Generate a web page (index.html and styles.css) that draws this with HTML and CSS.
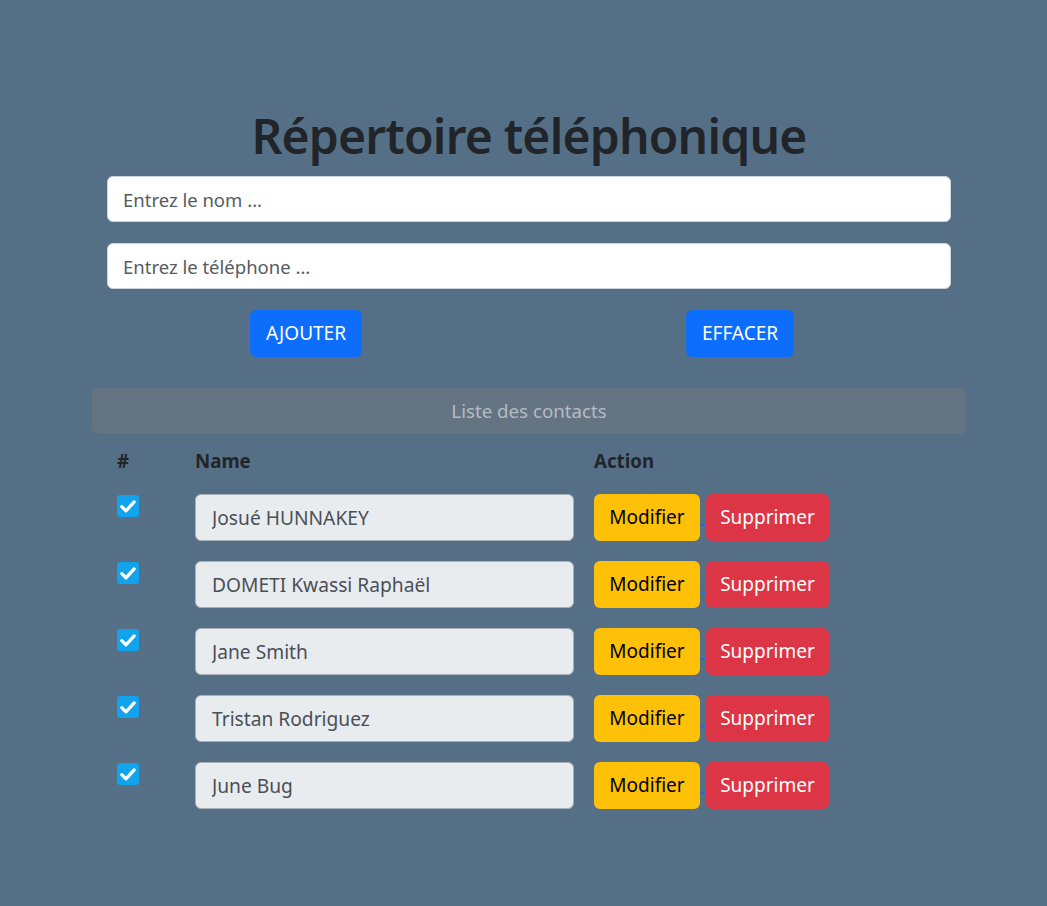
FILE: index.html
```html
<!DOCTYPE html>
<html lang="fr">
<head>
<meta charset="utf-8">
<title>Répertoire téléphonique</title>
<link rel="stylesheet" href="styles.css">
</head>
<body>
<div class="app">
  <h1 class="title">Répertoire téléphonique</h1>
  <form class="form">
    <input class="field" type="text" placeholder="Entrez le nom ...">
    <input class="field" type="text" placeholder="Entrez le téléphone ...">
    <div class="actions">
      <div class="col col-left"><button type="button" class="btn btn-primary">AJOUTER</button></div>
      <div class="col"><button type="button" class="btn btn-primary">EFFACER</button></div>
    </div>
  </form>
  <div class="list-header">Liste des contacts</div>
  <div class="table">
    <div class="row head">
      <div class="c1">#</div>
      <div class="c2">Name</div>
      <div class="c3">Action</div>
    </div>
    <div class="row">
      <div class="c1"><span class="check"><svg viewBox="0 0 16 16"><path d="M3.5 8.5l3 3 6-6.5" /></svg></span></div>
      <div class="c2"><input class="name" type="text" value="Josué HUNNAKEY" readonly></div>
      <div class="c3"><button class="btn btn-warning">Modifier</button><a class="sep" href="#">&nbsp;</a><button class="btn btn-danger">Supprimer</button></div>
    </div>
    <div class="row">
      <div class="c1"><span class="check"><svg viewBox="0 0 16 16"><path d="M3.5 8.5l3 3 6-6.5" /></svg></span></div>
      <div class="c2"><input class="name" type="text" value="DOMETI Kwassi Raphaël" readonly></div>
      <div class="c3"><button class="btn btn-warning">Modifier</button><a class="sep" href="#">&nbsp;</a><button class="btn btn-danger">Supprimer</button></div>
    </div>
    <div class="row">
      <div class="c1"><span class="check"><svg viewBox="0 0 16 16"><path d="M3.5 8.5l3 3 6-6.5" /></svg></span></div>
      <div class="c2"><input class="name" type="text" value="Jane Smith" readonly></div>
      <div class="c3"><button class="btn btn-warning">Modifier</button><a class="sep" href="#">&nbsp;</a><button class="btn btn-danger">Supprimer</button></div>
    </div>
    <div class="row">
      <div class="c1"><span class="check"><svg viewBox="0 0 16 16"><path d="M3.5 8.5l3 3 6-6.5" /></svg></span></div>
      <div class="c2"><input class="name" type="text" value="Tristan Rodriguez" readonly></div>
      <div class="c3"><button class="btn btn-warning">Modifier</button><a class="sep" href="#">&nbsp;</a><button class="btn btn-danger">Supprimer</button></div>
    </div>
    <div class="row">
      <div class="c1"><span class="check"><svg viewBox="0 0 16 16"><path d="M3.5 8.5l3 3 6-6.5" /></svg></span></div>
      <div class="c2"><input class="name" type="text" value="June Bug" readonly></div>
      <div class="c3"><button class="btn btn-warning">Modifier</button><a class="sep" href="#">&nbsp;</a><button class="btn btn-danger">Supprimer</button></div>
    </div>
  </div>
</div>
</body>
</html>
```
FILE: styles.css
```css
* { box-sizing: border-box; }
html, body { height: 100%; }
body {
  margin: 0;
  background: #557086;
  font-family: "Noto Sans", "Open Sans", sans-serif;
  color: #212529;
  font-size: 19px;
}
.app {
  width: 874px;
  margin-left: 92px;
  padding-top: 106px;
}
.title {
  margin: 0 0 10px;
  text-align: center;
  font-size: 48px;
  font-weight: 600;
  letter-spacing: -0.8px;
  line-height: 60px;
  color: #212529;
}
.form {
  padding: 0 15px;
}
.field {
  display: block;
  width: 100%;
  height: 46px;
  margin: 0 0 21px;
  padding: 0 15px;
  border: 1px solid #ced4da;
  border-radius: 6px;
  background: #fff;
  font-family: inherit;
  font-size: 18.5px;
  color: #495057;
}
.field::placeholder { color: #555b61; }
.actions {
  display: grid;
  grid-template-columns: 1fr 1fr;
  margin-bottom: 31px;
}
.col {
  display: flex;
  justify-content: center;
}
.col-left { padding-right: 24px; }
.btn {
  height: 47px;
  padding: 0 16px;
  border: 0;
  border-radius: 6px;
  font-family: inherit;
  font-size: 19px;
  line-height: 47px;
  cursor: pointer;
}
.btn-primary { background: #0d6efd; color: #fff; }
.btn-warning { background: #ffc107; color: #000; }
.btn-danger { background: #dc3545; color: #fff; }
.list-header {
  height: 46px;
  border-radius: 6px;
  background: #657482;
  color: #b3bcc4;
  text-align: center;
  line-height: 46px;
  font-size: 18.7px;
}
.table {
  padding: 14px 0 0 25px;
}
.row {
  display: flex;
  align-items: flex-start;
  margin-bottom: 20px;
}
.head {
  font-weight: 700;
  font-size: 18.7px;
  line-height: 26px;
  margin-bottom: 20px;
}
.c1 { width: 78px; }
.c2 { width: 399px; }
.c3 { display: flex; align-items: flex-start; }
.check {
  display: inline-block;
  width: 22px;
  height: 22px;
  margin-top: 1px;
  border-radius: 3px;
  background: #11a3ec;
}
.check svg {
  display: block;
  width: 22px;
  height: 22px;
  fill: none;
  stroke: #fff;
  stroke-width: 2.4;
  stroke-linecap: round;
  stroke-linejoin: round;
}
.name {
  display: block;
  width: 379px;
  height: 47px;
  padding: 0 16px;
  border: 1px solid #a9b0b7;
  border-radius: 6px;
  background: #e9ecef;
  font-family: inherit;
  font-size: 19.2px;
  color: #495057;
}
.btn-warning { width: 106px; padding: 0; }
.btn-danger { width: 123px; padding: 0; }
.sep {
  display: block;
  width: 6px;
  height: 47px;
  position: relative;
  font-size: 0;
  text-decoration: none;
}
.sep::after {
  content: "";
  position: absolute;
  left: 1px;
  right: 1px;
  top: 30px;
  height: 2px;
  background: #0d6efd;
}
```
